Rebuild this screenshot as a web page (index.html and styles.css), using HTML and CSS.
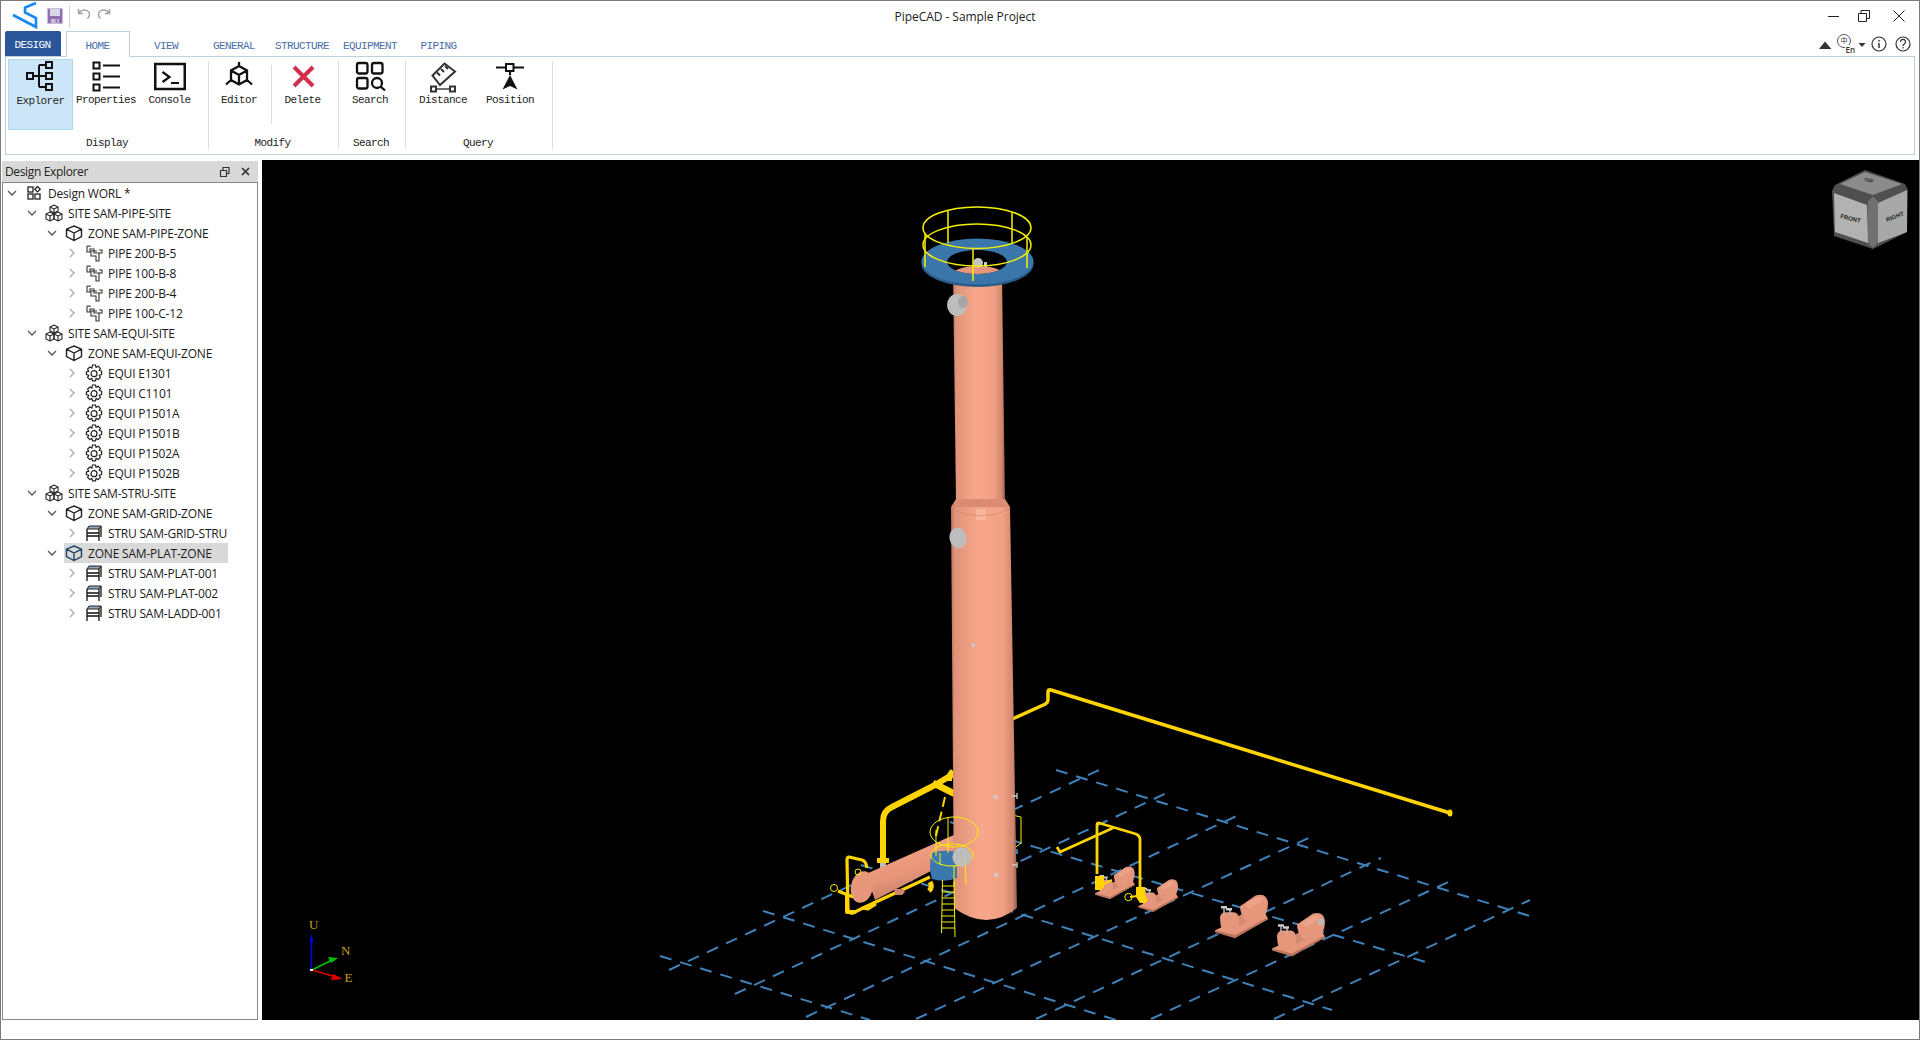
FILE: index.html
```html
<!DOCTYPE html>
<html lang="en">
<head>
<meta charset="utf-8">
<title>PipeCAD - Sample Project</title>
<link rel="stylesheet" href="styles.css">
</head>
<body>
<svg class="defs" aria-hidden="true">
  <symbol id="down" viewBox="0 0 16 16"><path d="M4 6l4 4 4-4" fill="none" stroke="#555" stroke-width="1.3"/></symbol>
  <symbol id="right" viewBox="0 0 16 16"><path d="M6 4l4 4-4 4" fill="none" stroke="#aaa" stroke-width="1.3"/></symbol>
  <symbol id="worl" viewBox="0 0 20 20"><g fill="none" stroke="#222" stroke-width="1.3"><rect x="4" y="4" width="5" height="5"/><rect x="4" y="11" width="5" height="5"/><rect x="11" y="11" width="5" height="5"/><path d="M13.5 3.5l2.7 2.7-2.7 2.7-2.7-2.7z"/></g></symbol>
  <symbol id="site" viewBox="0 0 20 20"><g fill="none" stroke="#222" stroke-width="1.1"><path d="M10 2l4 2v4l-4 2-4-2V4zM6 4l4 2 4-2M10 6v4"/><path d="M6 9l4 2v5l-4 2-4-2v-5zM2 11l4 2 4-2M6 13v5"/><path d="M14 9l4 2v5l-4 2-4-2v-5zM10 11l4 2 4-2M14 13v5"/></g></symbol>
  <symbol id="zone" viewBox="0 0 20 20"><g fill="none" stroke="currentColor" stroke-width="1.4"><path d="M10 3l7.5 3.2v7.3L10 17.5l-7.5-4V6.200zM2.500 6.200L10 10l7.500-3.800M10 10v7.500"/></g></symbol>
  <symbol id="pipe" viewBox="0 0 20 20"><g fill="none" stroke="#333" stroke-width="1.1"><path d="M3 3v6h3V6h4v2h3"/><path d="M3 3h3v1"/><path d="M7 8h3v2h5v8h-3v-5H7z"/><path d="M15 7h3v3h-3"/></g></symbol>
  <symbol id="equi" viewBox="0 0 20 20"><g fill="none" stroke="#222" stroke-width="1.2"><path d="M8.500 2h3l.6 2.300 2.100-1.100 2.200 2.200-1.100 2.100 2.300.7v3.400l-2.300.7 1.100 2.100-2.200 2.200-2.100-1.100-.6 2.300h-3l-.6-2.300-2.100 1.100-2.200-2.200 1.100-2.100-2.300-.7V9l2.300-.7-1.100-2.100 2.200-2.200 2.100 1.100z"/><circle cx="10" cy="10.700" r="3"/></g></symbol>
  <symbol id="stru" viewBox="0 0 20 20"><path d="M5 3h12l-2 3H3z" fill="#8fa6c0" stroke="#222" stroke-width="1"/><g fill="none" stroke="#111" stroke-width="1.300"><path d="M3 6v12M15 6v12M17 3v11M3 10h12M3 13h12"/></g></symbol>
</svg>

<div class="window">
  <header class="titlebar">
    <div class="qat">
      <svg class="logo" width="26" height="30" viewBox="0 0 26 30"><path d="M1 14l23 12V17L13 11.500V6.500L24 2" fill="none" stroke="#1488f5" stroke-width="2.600"/></svg>
      <svg class="save" width="16" height="16" viewBox="0 0 16 16"><path d="M.5.500h15v15H.5z" fill="#8f6fb0"/><path d="M3 1h10v7H3z" fill="#d9d9e6"/><path d="M4 11h8v4H4z" fill="#cdbfe0"/><path d="M8.500 11.500h2v3h-2z" fill="#8f6fb0"/></svg>
      <span class="qat-sep"></span>
      <svg class="hist" width="14" height="12" viewBox="0 0 14 12"><path d="M1.500 1v4.500H6M1.800 5.300C3 3 5 2 7.500 2c3 0 5 2 5 4.500 0 1.500-.6 2.800-2 4" fill="none" stroke="#a3a3a3" stroke-width="1.500"/></svg>
      <svg class="hist" width="14" height="12" viewBox="0 0 14 12"><path d="M12.500 1v4.500H8M12.200 5.300C11 3 9 2 6.500 2c-3 0-5 2-5 4.500 0 1.500.6 2.800 2 4" fill="none" stroke="#a3a3a3" stroke-width="1.500"/></svg>
    </div>
    <div class="title">PipeCAD - Sample Project</div>
    <div class="winctl">
      <span class="wc wc-n"><svg width="12" height="12" viewBox="0 0 12 12"><path d="M0 6.500h11" stroke="#222"/></svg></span>
      <span class="wc wc-n"><svg width="12" height="12" viewBox="0 0 12 12"><path d="M.5 3.500h8v8h-8zM3 3.500V.5h8.500v8H8.500" fill="none" stroke="#222"/></svg></span>
      <span class="wc wc-w"><svg width="12" height="12" viewBox="0 0 12 12"><path d="M.5.500l11 11M11.500.5l-11 11" stroke="#222" fill="none"/></svg></span>
    </div>
  </header>

  <nav class="tabbar">
    <div class="tabs">
      <div class="tab tab-app">DESIGN</div>
      <div class="tab-gap"></div>
      <div class="tab tab-on">HOME</div>
      <div class="tab">VIEW</div>
      <div class="tab">GENERAL</div>
      <div class="tab">STRUCTURE</div>
      <div class="tab">EQUIPMENT</div>
      <div class="tab">PIPING</div>
    </div>
    <svg class="tools" width="100" height="22" viewBox="0 0 100 22">
      <path d="M4 16L10 8.500 16.500 16z" fill="#333"/>
      <circle cx="29" cy="8" r="6.500" fill="none" stroke="#555" stroke-width="1"/>
      <text class="t-zh" x="25.500" y="10">中</text>
      <rect x="30" y="12" width="11" height="8" fill="#fff"/>
      <text class="t-en" x="30.500" y="20">En</text>
      <path d="M43.500 10h7L47 14z" fill="#333"/>
      <g fill="none" stroke="#333" stroke-width="1.200">
        <circle cx="64" cy="11" r="7"/>
        <circle cx="88" cy="11" r="7"/>
        <path d="M64 10v5M64 7v1.500" stroke-width="1.500"/>
        <path d="M85.500 9c0-3.500 5-3.500 5 0 0 2-2.500 2-2.500 4M88 14v1.500"/>
      </g>
    </svg>
  </nav>

  <section class="ribbon">
    <div class="group g-display">
      <div class="btns">
        <div class="btn btn-explorer active">
          <svg class="ico" viewBox="0 0 32 30"><g fill="none" stroke="#111" stroke-width="2"><rect x="2" y="12" width="6" height="6"/><rect x="21" y="1" width="6" height="6"/><rect x="21" y="12" width="6" height="6"/><rect x="21" y="23" width="6" height="6"/><path d="M8 15h13M14 4v22M14 4h7M14 26h7"/></g></svg>
          <span class="lbl">Explorer</span>
        </div>
        <div class="btn btn-props">
          <svg class="ico" viewBox="0 0 32 30"><g fill="none" stroke="#111" stroke-width="2"><rect x="3.500" y="1.500" width="6" height="6"/><rect x="3.500" y="12.500" width="6" height="6"/><rect x="3.500" y="23.500" width="6" height="6"/><path d="M13 4.500h17M13 15.500h17M13 26.500h17"/></g></svg>
          <span class="lbl">Properties</span>
        </div>
        <div class="btn btn-console">
          <svg class="ico" viewBox="0 0 32 30"><g fill="none" stroke="#111"><rect x="1.250" y="3" width="29.500" height="25" stroke-width="2.500"/><path d="M8.500 11l7 5-7 5" stroke-width="2.200"/><path d="M17 22h8" stroke-width="2"/></g></svg>
          <span class="lbl">Console</span>
        </div>
      </div>
      <div class="glabel">Display</div>
    </div>
    <span class="sep"></span>
    <div class="group g-modify">
      <div class="btns">
        <div class="btn btn-editor">
          <svg class="ico" viewBox="0 0 32 30"><path d="M16 5l8 4.500V19l-8 4.500L8 19V9.500zM8 9.500l8 4.500 8-4.500M16 14v9.500M16 1v4M8 19l-5 4.500M24 19l5 4.500" fill="none" stroke="#111" stroke-width="2.300"/></svg>
          <span class="lbl">Editor</span>
        </div>
        <span class="sep-in"></span>
        <div class="btn btn-delete">
          <svg class="ico" viewBox="0 0 32 30"><path d="M7 6l19 19M26 6L7 25" fill="none" stroke="#d22f4f" stroke-width="4"/></svg>
          <span class="lbl">Delete</span>
        </div>
      </div>
      <div class="glabel">Modify</div>
    </div>
    <span class="sep"></span>
    <div class="group g-search">
      <div class="btns">
        <div class="btn btn-search">
          <svg class="ico" viewBox="0 0 32 30"><g fill="none" stroke="#111" stroke-width="2.300"><rect x="3" y="2" width="10.500" height="10.500" rx="2"/><rect x="18" y="2" width="10.500" height="10.500" rx="2"/><rect x="3" y="17" width="10.500" height="10.500" rx="2"/><circle cx="23" cy="22" r="5"/><path d="M26.500 25.500l4.500 4"/></g></svg>
          <span class="lbl">Search</span>
        </div>
      </div>
      <div class="glabel">Search</div>
    </div>
    <span class="sep"></span>
    <div class="group g-query">
      <div class="btns">
        <div class="btn btn-distance">
          <svg class="ico" viewBox="0 0 32 30"><g fill="none" stroke="#333" stroke-width="2"><path d="M5.500 14.500L17.500 2.500 28 10.500 13 24z"/><path d="M10 11.500l3 3M14 8l3 3M18 5l3 3"/><path d="M9 28h14" stroke-width="1.400"/><rect x="4" y="25.500" width="5" height="5"/><rect x="23" y="25.500" width="5" height="5"/></g></svg>
          <span class="lbl">Distance</span>
        </div>
        <div class="btn btn-position">
          <svg class="ico" viewBox="0 0 32 30"><path d="M2 6.500h10M20 6.500h10M16 10v4" stroke="#111" stroke-width="2" fill="none"/><rect x="12" y="3" width="7.500" height="7" fill="#fff" stroke="#111" stroke-width="2"/><path d="M16 14l7.500 14.500L16 25l-7.500 3.500z" fill="#111"/></svg>
          <span class="lbl">Position</span>
        </div>
      </div>
      <div class="glabel">Query</div>
    </div>
    <span class="sep"></span>
  </section>

  <main class="main">
    <aside class="explorer">
      <div class="dock-head">
        <span class="dock-title">Design Explorer</span>
        <svg width="36" height="12" viewBox="0 0 36 12"><g fill="none" stroke="#333" stroke-width="1.200"><path d="M1.500 4.500h6v6h-6zM4 4.500v-3h6v6H7.500"/><path d="M23 2l7 7M30 2l-7 7" stroke-width="1.700"/></g></svg>
      </div>
      <div class="tree">
        <div class="row l0"><svg class="chev"><use href="#down"/></svg><span class="label"><svg class="ti"><use href="#worl"/></svg>Design WORL *</span></div>
        <div class="row l1"><svg class="chev"><use href="#down"/></svg><span class="label"><svg class="ti"><use href="#site"/></svg>SITE SAM-PIPE-SITE</span></div>
        <div class="row l2"><svg class="chev"><use href="#down"/></svg><span class="label"><svg class="ti"><use href="#zone"/></svg>ZONE SAM-PIPE-ZONE</span></div>
        <div class="row l3"><svg class="chev"><use href="#right"/></svg><span class="label"><svg class="ti"><use href="#pipe"/></svg>PIPE 200-B-5</span></div>
        <div class="row l3"><svg class="chev"><use href="#right"/></svg><span class="label"><svg class="ti"><use href="#pipe"/></svg>PIPE 100-B-8</span></div>
        <div class="row l3"><svg class="chev"><use href="#right"/></svg><span class="label"><svg class="ti"><use href="#pipe"/></svg>PIPE 200-B-4</span></div>
        <div class="row l3"><svg class="chev"><use href="#right"/></svg><span class="label"><svg class="ti"><use href="#pipe"/></svg>PIPE 100-C-12</span></div>
        <div class="row l1"><svg class="chev"><use href="#down"/></svg><span class="label"><svg class="ti"><use href="#site"/></svg>SITE SAM-EQUI-SITE</span></div>
        <div class="row l2"><svg class="chev"><use href="#down"/></svg><span class="label"><svg class="ti"><use href="#zone"/></svg>ZONE SAM-EQUI-ZONE</span></div>
        <div class="row l3"><svg class="chev"><use href="#right"/></svg><span class="label"><svg class="ti"><use href="#equi"/></svg>EQUI E1301</span></div>
        <div class="row l3"><svg class="chev"><use href="#right"/></svg><span class="label"><svg class="ti"><use href="#equi"/></svg>EQUI C1101</span></div>
        <div class="row l3"><svg class="chev"><use href="#right"/></svg><span class="label"><svg class="ti"><use href="#equi"/></svg>EQUI P1501A</span></div>
        <div class="row l3"><svg class="chev"><use href="#right"/></svg><span class="label"><svg class="ti"><use href="#equi"/></svg>EQUI P1501B</span></div>
        <div class="row l3"><svg class="chev"><use href="#right"/></svg><span class="label"><svg class="ti"><use href="#equi"/></svg>EQUI P1502A</span></div>
        <div class="row l3"><svg class="chev"><use href="#right"/></svg><span class="label"><svg class="ti"><use href="#equi"/></svg>EQUI P1502B</span></div>
        <div class="row l1"><svg class="chev"><use href="#down"/></svg><span class="label"><svg class="ti"><use href="#site"/></svg>SITE SAM-STRU-SITE</span></div>
        <div class="row l2"><svg class="chev"><use href="#down"/></svg><span class="label"><svg class="ti"><use href="#zone"/></svg>ZONE SAM-GRID-ZONE</span></div>
        <div class="row l3"><svg class="chev"><use href="#right"/></svg><span class="label"><svg class="ti"><use href="#stru"/></svg>STRU SAM-GRID-STRU</span></div>
        <div class="row l2"><svg class="chev"><use href="#down"/></svg><span class="label selected"><svg class="ti"><use href="#zone"/></svg>ZONE SAM-PLAT-ZONE</span></div>
        <div class="row l3"><svg class="chev"><use href="#right"/></svg><span class="label"><svg class="ti"><use href="#stru"/></svg>STRU SAM-PLAT-001</span></div>
        <div class="row l3"><svg class="chev"><use href="#right"/></svg><span class="label"><svg class="ti"><use href="#stru"/></svg>STRU SAM-PLAT-002</span></div>
        <div class="row l3"><svg class="chev"><use href="#right"/></svg><span class="label"><svg class="ti"><use href="#stru"/></svg>STRU SAM-LADD-001</span></div>
      </div>
    </aside>

    <div class="viewport">
      <svg class="scene" viewBox="262 160 1657 860" preserveAspectRatio="xMinYMin slice">
        <defs>
          <linearGradient id="steel" x1="0" x2="1" y1="0" y2="0">
            <stop offset="0" stop-color="#b9755c"/><stop offset=".06" stop-color="#e09379"/><stop offset=".45" stop-color="#f8a78b"/><stop offset=".78" stop-color="#f2a085"/><stop offset=".94" stop-color="#d0876d"/><stop offset="1" stop-color="#8f5a48"/>
          </linearGradient>
          <linearGradient id="shell" x1=".3" x2=".7" y1="0" y2="1">
            <stop offset="0" stop-color="#f5a488"/><stop offset=".55" stop-color="#e8967b"/><stop offset="1" stop-color="#b57660"/>
          </linearGradient>
          <clipPath id="hole"><ellipse cx="977" cy="262" rx="30" ry="12"/></clipPath>
          <g id="pump">
            <path d="M0 37L48 15l5 11-33 18-18-5z" fill="#e6967b"/>
            <path d="M0 37v2l20 6 33-19v-2L20 42z" fill="#b9755c"/>
            <path d="M20 25l10-6 5 8-13 7z" fill="#d08a70"/>
            <path d="M25 13L41 2q11-3 12 8 0 12-8 16l-14 2q-6-7-6-15z" fill="#e6967b"/>
            <path d="M30 11L42 4q5-1 7 2L34 16z" fill="#f0a88e" opacity=".7"/>
            <path d="M5 24q1-5 6-5h8q5 1 5 7v10l-3 3-6 1-8-3q-2-6-2-13z" fill="#e6967b"/>
            <path d="M9 21v-6M15 22v-6" stroke="#bbb" stroke-width="1.500"/>
            <path d="M6 14h6M11 16h6" stroke="#ccc" stroke-width="2.500"/>
          </g>
        </defs>
        <rect x="262" y="160" width="1657" height="860" fill="#000"/>

        <g class="grid">
          <path d="M1056 770L1533 917"/>
          <path d="M950 822L1429 963"/>
          <path d="M861 865L1332 1010"/>
          <path d="M763 911L1116 1020"/>
          <path d="M660 956L870 1020"/>
          <path d="M669 970L1099 770"/>
          <path d="M735 994L1171 791"/>
          <path d="M806 1017L1243 813"/>
          <path d="M916 1019L1315 835"/>
          <path d="M1036 1019L1381 858"/>
          <path d="M1151 1019L1455 879"/>
          <path d="M1274 1019L1530 900"/>
        </g>

        <!-- long pipe -->
        <path d="M1010 720l35.500-16q2.500-2 2.500-4v-8q0-3 3-2L1450 813" class="p-y" stroke-width="3.500"/>
        <ellipse cx="1450" cy="813" rx="2.500" ry="3.500" fill="#ffd400"/>

        <!-- right hand railing behind tower -->
        <path d="M1012 815l9 2v26l-5 4" class="rail"/>
        <path d="M1010 849h8v5h-8z" fill="#3a78ad"/>

        <!-- exchanger pipework -->
        <path d="M867 868q-1-7-5-8l-13-3q-2 0-2 3l1 49q1 5 5 4l12-6 65-30" class="p-y" stroke-width="3.200"/>
        <path d="M955 773l-20 12-43 22q-9 4-9 14v38" class="p-y" stroke-width="6"/>
        <path d="M933 783l22 11" class="p-y" stroke-width="6.500"/>
        <path d="M953 771q-4 4-4 10" class="p-y" stroke-width="6"/>
        <path d="M877 858h12v5h-12z" fill="#ffd400"/>
        <path d="M880 863h6v6h-6z" fill="#bbb"/>
        <path d="M945 797l-10 43" class="p-y" stroke-width="2" stroke-dasharray="10 5"/>

        <path d="M866 874l90-40v24l-81 42z" fill="url(#shell)"/>
        <ellipse cx="862" cy="887" rx="11" ry="16" fill="#e8977c" transform="rotate(12 862 887)"/>
        <path d="M895 889h8l2 3-3 3h-6l-2-3z" fill="#cf866c"/>
        <path d="M930 882q3 5-1 9" class="p-y" stroke-width="5"/>
        <path d="M862 908l6 1 8-5M838 891l15 6" class="p-y" stroke-width="3"/>
        <circle cx="834" cy="888" r="3.500" class="rail"/>
        <circle cx="858" cy="872" r="3" class="rail"/>
        <path d="M847 894v18h8" class="p-y" stroke-width="4"/>

        <!-- tower -->
        <path d="M953 274h49l3 226h-49z" fill="url(#steel)"/>
        <path d="M956 499h49l5 8H951z" fill="#d98c72"/>
        <path d="M951 507h59l7 401q-30 24-63 0z" fill="url(#steel)"/>
        <rect x="976" y="509" width="10" height="11" fill="#fbbfa6" opacity=".7"/>
        <path d="M951 509q29 14 59 0" fill="none" stroke="#c9846c" stroke-width="1" opacity=".6"/>
        <ellipse cx="958" cy="538" rx="8.500" ry="10.500" fill="#bdbdbd" transform="rotate(-12 958 538)"/>
        <circle cx="973" cy="645" r="2" fill="#c9c9c9"/>
        <circle cx="995.500" cy="797" r="2.200" fill="#c9c9c9"/>
        <circle cx="996" cy="875" r="2.200" fill="#c9c9c9"/>
        <path d="M1012 796h5M1017 793v6M1012 865h5M1017 862v6" stroke="#ccc" stroke-width="1.300"/>

        <!-- platform ring -->
        <ellipse cx="977.500" cy="264" rx="56" ry="23" fill="#2a5c88"/>
        <ellipse cx="977.500" cy="261.500" rx="56" ry="23" fill="#3a76aa"/>
        <ellipse cx="977" cy="262" rx="30" ry="12" fill="#000"/>
        <g clip-path="url(#hole)"><ellipse cx="978" cy="275" rx="26" ry="9" fill="#e8967b"/><circle cx="978" cy="263" r="5" fill="#c4c4c4"/><rect x="984" y="262" width="3" height="5" fill="#ccc"/></g>
        <ellipse cx="957" cy="305" rx="10" ry="11" fill="#bdbdbd"/>
        <ellipse cx="963" cy="302" rx="5" ry="6" fill="#a6a6a6"/>
        <g class="rail rail-top">
          <ellipse cx="977" cy="227.700" rx="54" ry="20.700"/>
          <ellipse cx="977" cy="245" rx="54" ry="21"/>
          <path d="M948 211v32M1012 212v31M973 248v33M925 233v34M1027 237v31"/>
        </g>

        <!-- drum, cages and ladder in front -->
        <path d="M932 853q10-4 25-1v26q-12 5-25 1-4-13 0-26z" fill="#3a78ad"/>
        <circle cx="962" cy="857" r="9.500" fill="#bdbdbd"/>
        <g class="rail">
          <ellipse cx="954" cy="832" rx="24" ry="15"/>
          <ellipse cx="952" cy="855" rx="21" ry="11"/>
          <path d="M948 817v36M936 830v26M955 867l10-12 1 30M954 866v20M940 853v12"/>
        </g>
        <g class="rail">
          <path d="M942.500 880l-1 53M954 882l1 55"/>
          <path d="M942 886h12M942 892h12M942 898h12M942 904h12M942 910h13M942 916h13M942 922h13M942 928h13"/>
        </g>
        <circle cx="962" cy="857" r="9.500" fill="#bdbdbd" opacity=".85"/>

        <!-- pumps -->
        <use href="#pump" transform="translate(1095 865.500) scale(.75)"/>
        <use href="#pump" transform="translate(1138.300 878.300) scale(.75)"/>
        <use href="#pump" transform="translate(1215 893.300)"/>
        <use href="#pump" transform="translate(1272 911.600)"/>
        <ellipse cx="1321" cy="922" rx="3" ry="3.500" fill="#bbb"/>

        <!-- pump pipework -->
        <path d="M1057 847l3 5 53-24" class="p-y" stroke-width="2.800"/>
        <path d="M1097 874v-49q0-2 2-2l37 11q4 2 4 5v48" class="p-y" stroke-width="2.800"/>
        <path d="M1095 876h9v11l-3 3h-6zM1136 887h9v8l3 5-3 3h-5l-4-6z" fill="#ffd400"/>
        <path d="M1104 884l8-4" class="p-y" stroke-width="2"/>
        <circle cx="1128.500" cy="897" r="3.700" class="rail"/>
        <path d="M1130 897l7-1" class="p-y" stroke-width="2"/>

        <!-- axis triad -->
        <path d="M311.500 970V940" stroke="#0000e0" stroke-width="1.600"/>
        <path d="M311.500 933l-2 10h4z" fill="#0000e0"/>
        <path d="M312 970l22-11" stroke="#00c000" stroke-width="1.600"/>
        <path d="M338 958l-10-1 3 6z" fill="#00c000"/>
        <path d="M312 970l24 7" stroke="#e00000" stroke-width="1.600"/>
        <path d="M343 979l-10-5-2 6z" fill="#e00000"/>
        <rect x="310" y="969" width="3" height="2" fill="#eee"/>
        <text class="axis" x="309" y="929">U</text>
        <text class="axis" x="341" y="955">N</text>
        <text class="axis" x="344.500" y="982">E</text>

        <!-- view cube -->
        <path d="M1865 170l40 14 3 6-1 42-34 17-39-13-2-45 3-6z" fill="#4f4f4f"/>
        <path d="M1865 172l37 12-29 11-33-11z" fill="#8c8c8c"/>
        <path d="M1834 193l33 12 1 38-33-11z" fill="#b2b2b2"/>
        <path d="M1878 203l29-13v42l-29 11z" fill="#a8a8a8"/>
        <path d="M1868 202l5-6 5 6v41l-5 5-5-5z" fill="#707070"/>
        <text class="cube" transform="translate(1840 218) rotate(14)">FRONT</text>
        <text class="cube" transform="translate(1887 222) rotate(-22)">RIGHT</text>
        <text class="cube cube-top" transform="translate(1864 181) rotate(12)">TOP</text>
      </svg>
    </div>
  </main>
  <footer class="statusbar"></footer>
</div>
</body>
</html>
```

FILE: styles.css
```css
* { box-sizing: border-box; }
html, body { margin: 0; padding: 0; height: 100%; background: #fff; overflow: hidden; }
.defs { display: none; }

.window {
  width: 1920px;
  height: 1040px;
  border: 1px solid #7a7a7a;
  display: flex;
  flex-direction: column;
  background: #fff;
  font-family: "Open Sans", "Noto Sans", sans-serif;
  font-size: 12px;
  color: #1a1a1a;
}

/* title bar */
.titlebar {
  height: 30px;
  flex: none;
  display: grid;
  grid-template-columns: 1fr auto 1fr;
  align-items: center;
}
.qat { display: flex; align-items: center; padding-left: 11px; }
.logo { flex: none; }
.save { margin-left: 9px; margin-top: -1px; }
.qat-sep { width: 1px; height: 23px; background: #d8d8d8; margin: 0 7px 0 6px; }
.hist { margin-right: 6px; margin-top: -4px; }
.title { padding-left: 10px; font-size: 12px; color: #222; margin-top: 0; letter-spacing: -.05px; }
.winctl { display: flex; justify-content: flex-end; }
.wc { display: flex; justify-content: center; align-items: center; height: 30px; }
.wc-n { width: 30px; }
.wc-w { width: 40px; }

/* tabs */
.tabbar {
  height: 25px;
  flex: none;
  display: flex;
  justify-content: space-between;
  padding-left: 4px;
  font-family: "Liberation Mono", monospace;
}
.tabs {
  display: grid;
  grid-template-columns: 56px 5px 64px 73px 63px 73px 63px 74px;
  height: 25px;
}
.tab {
  display: flex;
  align-items: center;
  justify-content: center;
  font-size: 11px;
  letter-spacing: -.6px;
  color: #4a6ea8;
  padding-top: 4px;
  padding-right: 1px;
}
.tab-app {
  background: #2b579a;
  color: #fff;
  border-radius: 2px 2px 0 0;
  padding-top: 2px;
  height: 25px;
}
.tab-on {
  background: #fff;
  border: 1px solid #bcd0e0;
  border-bottom: 1px solid #fff;
  height: 26px;
  position: relative;
  z-index: 1;
}
.tools { margin: 2px 4px 0 0; }
.t-zh { font-family: "Noto Sans CJK SC", sans-serif; font-size: 7px; fill: #333; }
.t-en { font-family: "Open Sans", sans-serif; font-size: 8px; font-weight: 600; fill: #333; }

/* ribbon */
.ribbon {
  height: 99px;
  flex: none;
  margin: 0 4px;
  border: 1px solid #bcd0e0;
  padding: 2px 0 0 2px;
  display: flex;
  font-family: "Liberation Mono", monospace;
  font-size: 11px;
  letter-spacing: -.6px;
  color: #222;
}
.group { display: flex; flex-direction: column; flex: none; }
.g-display { width: 200px; }
.g-modify { width: 129px; }
.g-search { width: 66px; }
.g-query { width: 146px; }
.btns { display: flex; height: 71px; }
.glabel { text-align: center; line-height: 12px; margin-top: 7px; padding-right: 2px; }
.sep { width: 1px; height: 88px; margin-top: 2px; background: #dcdcdc; flex: none; }
.sep-in { width: 1px; height: 59px; margin: 6px 0 0 2px; background: #dcdcdc; flex: none; }
.btn {
  display: flex;
  flex-direction: column;
  align-items: center;
  padding-top: 2px;
  flex: none;
  height: 71px;
}
.btn.active { background: #cde6f7; border: 1px solid #aed6f1; padding-top: 1px; }
.ico { width: 32px; height: 30px; flex: none; overflow: visible; }
.lbl { line-height: 12px; margin-top: 3px; white-space: nowrap; }
.active .lbl { margin-top: 4px; }
.btn-explorer { width: 65px; }
.btn-props { width: 66px; }
.btn-console { width: 61px; }
.btn-editor { width: 60px; }
.btn-delete { width: 61px; }
.btn-search { width: 62px; }
.btn-distance { width: 74px; }
.btn-position { width: 60px; }

/* main */
.main {
  flex: none;
  height: 860px;
  margin-top: 5px;
  display: flex;
}
.explorer {
  width: 256px;
  margin: 1px 4px 0 1px;
  display: flex;
  flex-direction: column;
  flex: none;
}
.dock-head {
  height: 21px;
  flex: none;
  background: #d9d9d9;
  display: flex;
  align-items: center;
  justify-content: space-between;
  padding: 0 3px 0 3px;
  font-size: 12px;
  letter-spacing: -.35px;
  color: #222;
}
.tree {
  flex: 1;
  border: 1px solid #828790;
  background: #fff;
  padding-top: 0;
  color: #1a1a1a;
  letter-spacing: -.2px;
}
.row { height: 20px; display: flex; align-items: center; white-space: nowrap; }
.l0 { padding-left: 1px; }
.l1 { padding-left: 21px; }
.l2 { padding-left: 41px; }
.l3 { padding-left: 61px; }
.chev { width: 16px; height: 16px; flex: none; margin-right: 4px; }
.label { display: flex; align-items: center; height: 20px; padding-right: 16px; color: #1a1a1a; }
.ti { width: 20px; height: 20px; flex: none; margin-right: 4px; color: #222; }
.selected { background: #d9d9d9; }
.selected .ti { color: #1d4466; }

/* viewport */
.viewport { flex: 1; background: #000; min-width: 0; }
.scene { display: block; width: 100%; height: 100%; }
.grid path { fill: none; stroke: #3f82ba; stroke-width: 2; stroke-dasharray: 12 9; }
.p-y { fill: none; stroke: #ffd400; stroke-linejoin: round; }
.rail { fill: none; stroke: #f5f000; stroke-width: 1; }
.rail-top { stroke-width: 1.500; stroke: #f5f000; }
.axis { font-family: "Liberation Serif", serif; font-size: 13px; fill: #c9a20a; }
.cube { font-family: "Liberation Sans", sans-serif; font-size: 6px; font-weight: 700; fill: #222; }
.cube-top { font-size: 4.500px; }

.statusbar { flex: 1; background: #fff; }
```
